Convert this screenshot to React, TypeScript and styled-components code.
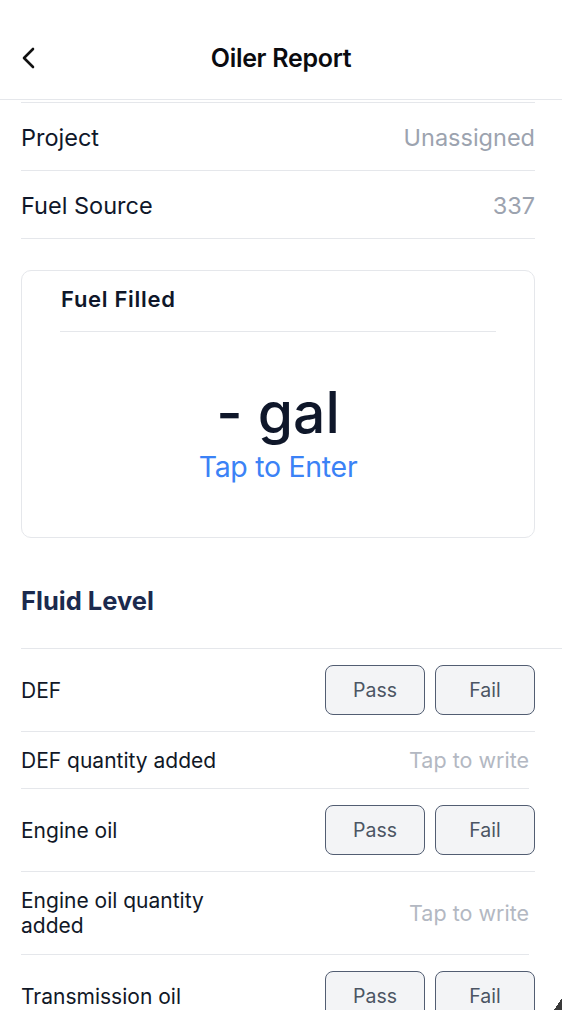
import React from "react";
import styled, { createGlobalStyle } from "styled-components";

const Global = createGlobalStyle`
  html, body { margin: 0; padding: 0; background: #ffffff; }
  body { font-family: Inter, "Noto Sans", sans-serif; color: #111827; -webkit-font-smoothing: antialiased; }
  * { box-sizing: border-box; }
`;

const Screen = styled.div`
  width: 562px;
  height: 1010px;
  overflow: hidden;
  position: relative;
  background: #fff;
`;

const Header = styled.header`
  height: 100px;
  display: grid;
  grid-template-columns: 60px 1fr 60px;
  align-items: center;
  border-bottom: 1px solid #e5e7eb;
  padding-top: 16px;
`;

const BackButton = styled.button`
  border: none;
  background: none;
  padding: 0 0 0 20px;
  display: flex;
  align-items: center;
  color: #111;
  cursor: pointer;
`;

const Title = styled.h1`
  margin: 0;
  text-align: center;
  font-size: 25px;
  font-weight: 600;
  color: #0b0b0f;
  letter-spacing: -0.3px;
`;

const Body = styled.main`
  padding: 0 0 0 21px;
`;

const InfoList = styled.div`
  margin-right: 27px;
  border-top: 1px solid #e5e7eb;
  margin-top: 2px;
`;

const InfoRow = styled.div`
  height: 68px;
  display: flex;
  align-items: center;
  justify-content: space-between;
  border-bottom: 1px solid #e5e7eb;
  font-size: 23.5px;
  padding-top: 1px;
`;

const InfoLabel = styled.span`
  color: #0f172a;
`;

const InfoValue = styled.span`
  color: #9ca3af;
`;

const Card = styled.section`
  margin: 31px 27px 0 0;
  height: 268px;
  border: 1px solid #e5e7eb;
  border-radius: 10px;
  padding: 13px 38px 0 38px;
  display: flex;
  flex-direction: column;
`;

const CardTitle = styled.h2`
  margin: 0;
  padding: 2px 0 19px 1px;
  font-size: 22px;
  font-weight: 600;
  letter-spacing: 0.7px;
  color: #0f172a;
  border-bottom: 1.5px solid #e5e7eb;
`;

const CardValue = styled.div`
  margin-top: 49px;
  text-align: center;
  font-size: 57px;
  line-height: 64px;
  font-weight: 500;
  color: #0f172a;
`;

const CardAction = styled.div`
  margin-top: 5px;
  text-align: center;
  font-size: 28.5px;
  line-height: 34px;
  color: #3b82f6;
  letter-spacing: -0.3px;
`;

const SectionTitle = styled.h3`
  margin: 32px 0 0;
  height: 79px;
  padding-top: 15px;
  font-size: 25.5px;
  font-weight: 700;
  color: #1b2a4e;
  border-bottom: 1.5px solid #e5e7eb;
`;

const CheckRow = styled.div<{ $tall?: boolean; $inset?: number }>`
  display: flex;
  align-items: center;
  justify-content: space-between;
  min-height: ${(p) => (p.$tall ? 83 : 57)}px;
  margin-right: ${(p) => p.$inset ?? 27}px;
  border-bottom: 1.5px solid #e5e7eb;
  font-size: 21px;
`;

const CheckLabel = styled.span`
  color: #111827;
  line-height: 25px;
  max-width: 230px;
`;

const ButtonGroup = styled.div`
  display: flex;
  gap: 10px;
`;

const ChoiceButton = styled.button`
  width: 100px;
  height: 50px;
  border: 1.5px solid #525d72;
  border-radius: 8px;
  background: #f3f4f6;
  font-family: Inter, "Noto Sans", sans-serif;
  font-size: 19.5px;
  color: #4b5563;
  cursor: pointer;
`;

const Placeholder = styled.span`
  color: #b3b8c2;
  font-size: 21.5px;
`;

const Corner = styled.div`
  position: absolute;
  right: 0;
  bottom: 0;
  width: 8px;
  height: 12px;
  background: linear-gradient(to bottom right, transparent 50%, #3a3a3a 50%);
`;

type Item =
  | { kind: "check"; label: string }
  | { kind: "text"; label: string };

const items: Item[] = [
  { kind: "check", label: "DEF" },
  { kind: "text", label: "DEF quantity added" },
  { kind: "check", label: "Engine oil" },
  { kind: "text", label: "Engine oil quantity added" },
  { kind: "check", label: "Transmission oil" },
];

export default function App() {
  return (
    <Screen>
      <Global />
      <Header>
        <BackButton aria-label="Back">
          <svg width="18" height="24" viewBox="0 0 18 24" fill="none">
            <path d="M13 3 L4 12 L13 21" stroke="#111" strokeWidth="2.6" strokeLinecap="round" strokeLinejoin="round" />
          </svg>
        </BackButton>
        <Title>Oiler Report</Title>
        <span />
      </Header>
      <Body>
        <InfoList>
          <InfoRow>
            <InfoLabel>Project</InfoLabel>
            <InfoValue>Unassigned</InfoValue>
          </InfoRow>
          <InfoRow>
            <InfoLabel>Fuel Source</InfoLabel>
            <InfoValue>337</InfoValue>
          </InfoRow>
        </InfoList>
        <Card>
          <CardTitle>Fuel Filled</CardTitle>
          <CardValue>- gal</CardValue>
          <CardAction>Tap to Enter</CardAction>
        </Card>
        <SectionTitle>Fluid Level</SectionTitle>
        {items.map((it) =>
          it.kind === "check" ? (
            <CheckRow key={it.label} $tall>
              <CheckLabel>{it.label}</CheckLabel>
              <ButtonGroup>
                <ChoiceButton>Pass</ChoiceButton>
                <ChoiceButton>Fail</ChoiceButton>
              </ButtonGroup>
            </CheckRow>
          ) : (
            <CheckRow key={it.label} $inset={33} $tall={it.label.length > 20}>
              <CheckLabel>{it.label}</CheckLabel>
              <Placeholder>Tap to write</Placeholder>
            </CheckRow>
          )
        )}
      </Body>
      <Corner />
    </Screen>
  );
}
